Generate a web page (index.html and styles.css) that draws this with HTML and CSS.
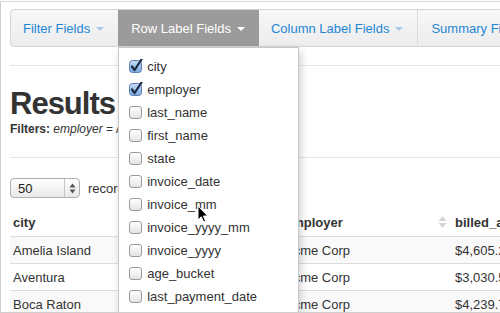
FILE: index.html
```html
<!DOCTYPE html>
<html>
<head>
<meta charset="utf-8">
<link rel="stylesheet" href="styles.css">
</head>
<body>
<div class="frame">
  <div class="page">
    <div class="navbar">
      <ul class="nav">
        <li class="nav-item"><a class="nav-link">Filter Fields<b class="caret"></b></a></li>
        <li class="nav-item active">
          <a class="nav-link">Row Label Fields<b class="caret"></b></a>
          <ul class="menu">
            <li class="menu-item"><span class="cb checked"><svg viewBox="0 0 14 14" width="14" height="14"><rect x="0.5" y="1.5" width="12" height="12" rx="3" fill="url(#g)" stroke="#5a7fb0"/><path d="M3 7.5 L5.6 11 L12.5 0.5" fill="none" stroke="#1c2a44" stroke-width="2.2" stroke-linecap="round" stroke-linejoin="round"/></svg></span>city</li>
            <li class="menu-item"><span class="cb checked"><svg viewBox="0 0 14 14" width="14" height="14"><rect x="0.5" y="1.5" width="12" height="12" rx="3" fill="url(#g)" stroke="#5a7fb0"/><path d="M3 7.5 L5.6 11 L12.5 0.5" fill="none" stroke="#1c2a44" stroke-width="2.2" stroke-linecap="round" stroke-linejoin="round"/></svg></span>employer</li>
            <li class="menu-item"><span class="cb"></span>last_name</li>
            <li class="menu-item"><span class="cb"></span>first_name</li>
            <li class="menu-item"><span class="cb"></span>state</li>
            <li class="menu-item"><span class="cb"></span>invoice_date</li>
            <li class="menu-item"><span class="cb"></span>invoice_mm</li>
            <li class="menu-item"><span class="cb"></span>invoice_yyyy_mm</li>
            <li class="menu-item"><span class="cb"></span>invoice_yyyy</li>
            <li class="menu-item"><span class="cb"></span>age_bucket</li>
            <li class="menu-item"><span class="cb"></span>last_payment_date</li>
            <li class="menu-item"><span class="cb"></span>days_late</li>
          </ul>
        </li>
        <li class="nav-item sep"><a class="nav-link">Column Label Fields<b class="caret"></b></a></li>
        <li class="nav-item"><a class="nav-link">Summary Fields<b class="caret"></b></a></li>
      </ul>
    </div>
    <hr class="rule">
    <h1 class="title">Results</h1>
    <p class="filters"><b>Filters:</b> <i>employer</i> = Acme Corp</p>
    <hr class="rule rule2">
    <div class="controls">
      <span class="select"><span class="select-val">50</span><span class="spin"><svg width="7" height="11" viewBox="0 0 7 11"><path d="M3.5 0.5 L6.5 4.5 L0.5 4.5 Z" fill="#555"/><path d="M3.5 10.5 L6.5 6.5 L0.5 6.5 Z" fill="#555"/></svg></span></span>
      <span class="records">records per page</span>
    </div>
    <table class="grid">
      <thead>
        <tr><th class="c1">city</th><th class="c2">employer<span class="sort"><svg width="9" height="14" viewBox="0 0 9 14"><path d="M4.5 1 L8.5 6 L0.5 6 Z" fill="#d6d6d6"/><path d="M4.5 13 L8.5 8 L0.5 8 Z" fill="#d6d6d6"/></svg></span></th><th class="c3">billed_amount</th></tr>
      </thead>
      <tbody>
        <tr class="odd"><td>Amelia Island</td><td>Acme Corp</td><td>$4,605.25</td></tr>
        <tr><td>Aventura</td><td>Acme Corp</td><td>$3,030.50</td></tr>
        <tr class="odd"><td>Boca Raton</td><td>Acme Corp</td><td>$4,239.75</td></tr>
      </tbody>
    </table>
  </div>
  <svg class="cursor" width="12" height="18" viewBox="0 0 12 18"><path d="M1 1 L1 15 L4.3 11.8 L6.6 17 L8.6 16.1 L6.4 11 L10.8 11 Z" fill="#000" stroke="#fff" stroke-width="1" stroke-linejoin="round"/></svg>
  <svg width="0" height="0" style="position:absolute"><defs><linearGradient id="g" x1="0" y1="0" x2="0" y2="1"><stop offset="0" stop-color="#c7dcf5"/><stop offset="1" stop-color="#7aa9e0"/></linearGradient></defs></svg>
</div>
</body>
</html>
```

FILE: styles.css
```css
html, body {
  margin: 0;
  padding: 0;
  background: #fff;
  overflow: hidden;
}
body {
  font-family: "Liberation Sans", Arial, sans-serif;
  color: #333;
  font-size: 13px;
}
.frame {
  position: relative;
  margin-top: 1px;
  height: 310px;
  border-top: 1px solid #d6d6d6;
  border-left: 1px solid #cfcfcf;
  border-bottom: 1px solid #cfcfcf;
  overflow: hidden;
}
.page {
  width: 620px;
  padding: 7px 0 0 9px;
}
.navbar {
  width: 600px;
  height: 36px;
  border: 1px solid #d4d4d4;
  border-radius: 4px;
  background: linear-gradient(#f8f8f8, #ececec);
}
.nav {
  list-style: none;
  margin: 0;
  padding: 0;
  display: flex;
  height: 36px;
}
.nav-item {
  position: relative;
  height: 36px;
}
.nav-link {
  display: flex;
  align-items: center;
  height: 36px;
  padding: 0 14px 0 12px;
  color: #1f86d3;
  font-size: 13px;
  white-space: nowrap;
}
.caret {
  display: inline-block;
  width: 0;
  height: 0;
  margin-left: 6px;
  margin-top: 1px;
  border-left: 4px solid transparent;
  border-right: 4px solid transparent;
  border-top: 4px solid #a9c9e6;
}
.nav-item.active {
  background: #9b9b9b;
}
.nav-item.active .nav-link {
  color: #fff;
  padding-left: 13px;
}
.nav-item.active .caret {
  border-top-color: #fff;
}
.nav-item.sep {
  border-right: 1px solid #dcdcdc;
}
.nav-item.sep + .nav-item .nav-link {
  padding-left: 13px;
}
.menu {
  position: absolute;
  top: 37px;
  left: 0;
  width: 179px;
  margin: 0;
  padding: 7px 0;
  list-style: none;
  background: #fff;
  border: 1px solid #c8c8c8;
  box-shadow: 2px 4px 8px rgba(0, 0, 0, 0.18);
  z-index: 5;
}
.menu-item {
  display: flex;
  align-items: center;
  height: 23px;
  padding-left: 10px;
  font-size: 13px;
  color: #333;
  white-space: nowrap;
}
.cb {
  display: inline-block;
  box-sizing: border-box;
  width: 13px;
  height: 13px;
  margin-right: 5px;
  border: 1px solid #9a9a9a;
  border-radius: 3px;
  background: linear-gradient(#ffffff, #e4e4e4);
  box-shadow: inset 0 1px 0 #fff;
}
.cb.checked {
  border: none;
  background: none;
  box-shadow: none;
  position: relative;
  top: -1px;
  width: 13px;
  height: 14px;
}
.cb.checked svg {
  display: block;
}
.rule {
  margin: 18px 0 0 0;
  border: 0;
  border-top: 1px solid #e6e6e6;
  height: 0;
}
.title {
  margin: 21px 0 0 0;
  font-size: 31px;
  line-height: 34px;
  letter-spacing: -1px;
  font-weight: bold;
  color: #333;
}
.filters {
  margin: 0;
  font-size: 12px;
  line-height: 16px;
}
.rule2 {
  margin-top: 20px;
}
.controls {
  display: flex;
  align-items: center;
  margin-top: 20px;
  height: 20px;
}
.select {
  box-sizing: border-box;
  display: flex;
  align-items: center;
  width: 70px;
  height: 20px;
  border: 1px solid #b0b0b0;
  border-radius: 4px;
  background: linear-gradient(#ffffff, #e8e8e8);
}
.select-val {
  flex: 1;
  padding-left: 7px;
  font-size: 13px;
  color: #222;
}
.spin {
  display: flex;
  align-items: center;
  justify-content: center;
  width: 14px;
  height: 18px;
  border-left: 1px solid #c4c4c4;
}
.records {
  margin-left: 8px;
  font-size: 13px;
}
.grid {
  margin-top: 11px;
  border-collapse: collapse;
  font-size: 13px;
}
.grid th {
  height: 27px;
  padding: 0 3px;
  text-align: left;
  font-weight: bold;
  color: #333;
  white-space: nowrap;
}
.grid td {
  height: 26px;
  padding: 0 3px;
  border-top: 1px solid #dddddd;
  white-space: nowrap;
}
.grid tr.odd td {
  background: #f9f9f9;
}
.c1 { width: 266px; }
.c2 { width: 164px; position: relative; }
.c3 { width: 150px; }
.sort {
  position: absolute;
  right: 5px;
  top: 6px;
}
.cursor {
  position: absolute;
  left: 196px;
  top: 203px;
  z-index: 10;
}
```
